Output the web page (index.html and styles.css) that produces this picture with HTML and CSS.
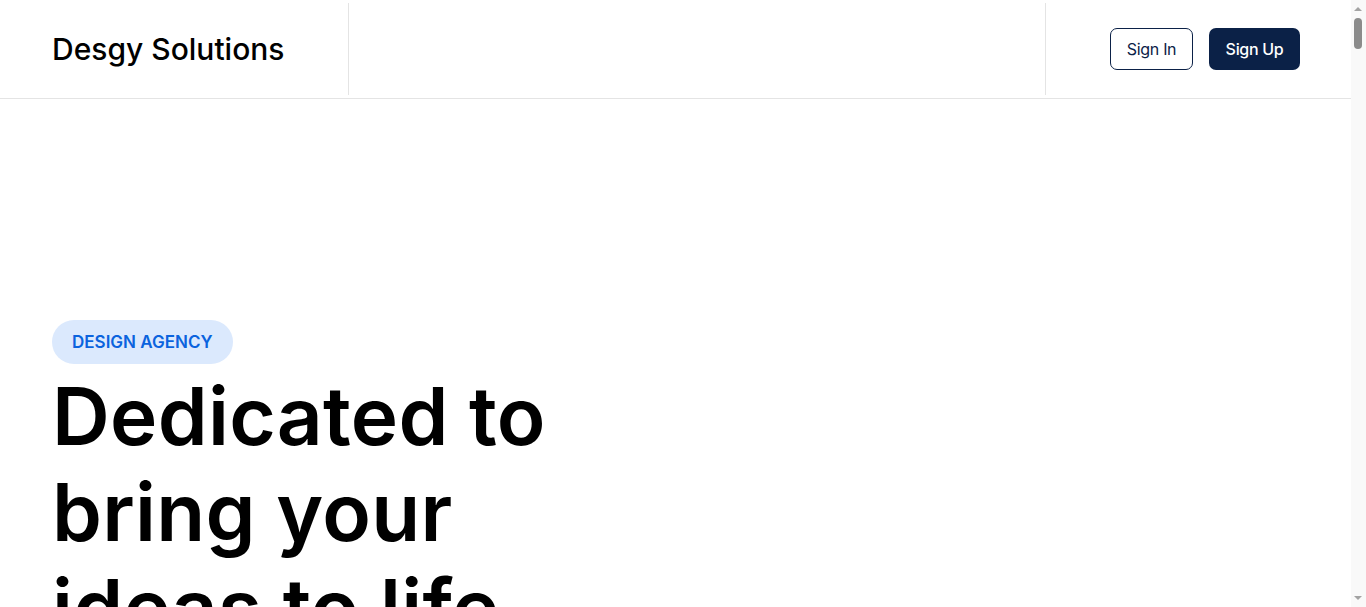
FILE: index.html
```html
<!DOCTYPE html>
<html lang="en">
<head>
<meta charset="utf-8">
<title>Desgy Solutions</title>
<link rel="stylesheet" href="styles.css">
</head>
<body>
<div class="page">
  <header class="site-header">
    <div class="brand-cell">
      <a class="brand" href="#">Desgy Solutions</a>
    </div>
    <nav class="nav-cell"></nav>
    <div class="actions-cell">
      <a class="btn btn-outline" href="#">Sign In</a>
      <a class="btn btn-solid" href="#">Sign Up</a>
    </div>
  </header>
  <main>
    <section class="hero">
      <span class="badge">DESIGN AGENCY</span>
      <h1 class="hero-title">Dedicated to<br>bring your<br>ideas to life</h1>
      <p class="hero-text">We help brands and startups craft digital products that people love to use.</p>
    </section>
  </main>
</div>
<div class="scrollbar" aria-hidden="true">
  <span class="sb-arrow sb-up"></span>
  <span class="sb-thumb"></span>
  <span class="sb-arrow sb-down"></span>
</div>
</body>
</html>
```

FILE: styles.css
```css
* { box-sizing: border-box; }
html, body { margin: 0; padding: 0; }
body {
  font-family: Inter, "Noto Sans", "Liberation Sans", sans-serif;
  color: #000;
  background: #fff;
}
a { text-decoration: none; }

.page { margin-right: 15px; }

.site-header {
  display: flex;
  height: 99px;
  border-bottom: 1px solid #e4e4e4;
}
.brand-cell {
  width: 349px;
  display: flex;
  align-items: center;
  padding-left: 52px;
  margin: 3px 0;
  border-right: 1px solid #e4e4e4;
}
.brand {
  color: #000;
  font-size: 30px;
  font-weight: 500;
}
.nav-cell {
  flex: 1;
  margin: 3px 0;
  border-right: 1px solid #e4e4e4;
}
.actions-cell {
  width: 305px;
  display: flex;
  align-items: center;
  justify-content: flex-end;
  gap: 16px;
  padding-right: 51px;
}
.btn {
  height: 42px;
  display: inline-flex;
  align-items: center;
  justify-content: center;
  border-radius: 7px;
  font-size: 16px;
  letter-spacing: -0.3px;
}
.btn-outline {
  width: 83px;
  border: 1px solid #0b2147;
  color: #0b2147;
}
.btn-solid {
  width: 91px;
  background: #0b2147;
  color: #fff;
  font-weight: 500;
}

.hero {
  padding: 221px 52px 120px;
  min-height: 900px;
}
.badge {
  display: inline-flex;
  align-items: center;
  height: 44px;
  padding: 0 20px;
  border-radius: 22px;
  background: #dbe9fd;
  color: #0a63de;
  font-size: 17px;
  font-weight: 600;
}
.hero-title {
  margin: 4px 0 0;
  font-size: 80px;
  font-weight: 600;
  line-height: 96px;
  letter-spacing: 0.3px;
}
.hero-text {
  font-size: 18px;
  color: #444;
}

/* browser scrollbar look */
.scrollbar {
  position: fixed;
  top: 0;
  right: 0;
  bottom: 0;
  width: 15px;
  background: #f9f9f9;
}
.sb-arrow {
  position: absolute;
  left: 3px;
  width: 0;
  height: 0;
  border-left: 4px solid transparent;
  border-right: 4px solid transparent;
}
.sb-up {
  top: 7px;
  border-bottom: 4px solid #a3a3a3;
}
.sb-down {
  bottom: 7px;
  border-top: 4px solid #a3a3a3;
}
.sb-thumb {
  position: absolute;
  top: 18px;
  left: 3px;
  width: 8px;
  height: 31px;
  border-radius: 4px;
  background: #8b8b8b;
}
```
